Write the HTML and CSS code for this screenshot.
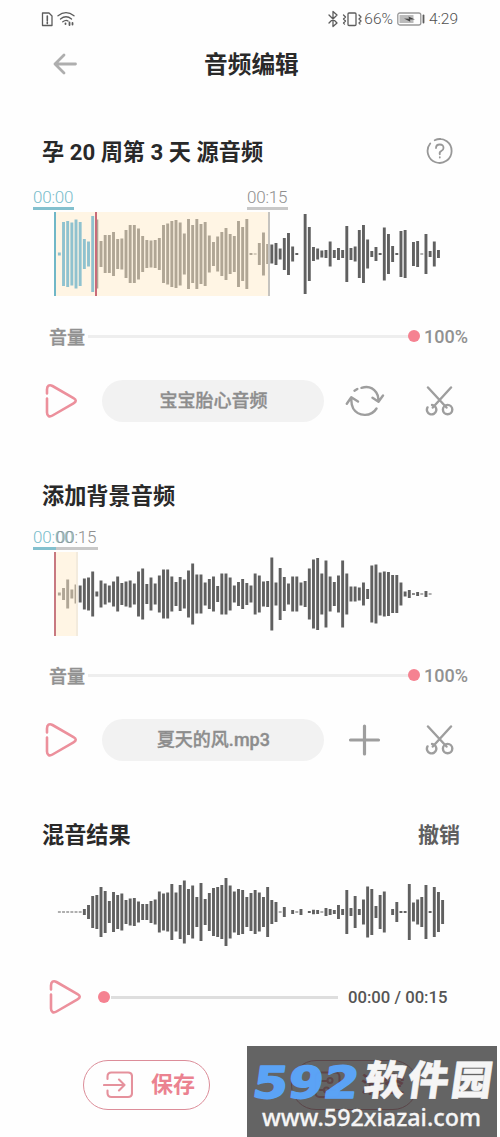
FILE: index.html
```html
<!DOCTYPE html>
<html lang="zh-CN">
<head>
<meta charset="utf-8">
<title>音频编辑</title>
<link rel="stylesheet" href="styles.css">
</head>
<body>
<svg class="defs" aria-hidden="true">
  <symbol id="play" viewBox="0 0 36 38"><path d="M4 11.5V7.5C4 3.7 6.3 2.2 9.5 4L30.500 16.200C33.500 18 33.500 19.600 30.500 21.300L9.500 33.500C6.300 35.300 4 34 4 30.500V16.500"/></symbol>
  <symbol id="scissors" viewBox="0 0 30 30"><path d="M3 1.500L21.500 21.500M26 1.500L7.800 21.500"/><circle cx="22.600" cy="23.600" r="4.700"/><path d="M2.500 21.400A4.700 4.700 0 1 0 7 19"/></symbol>
</svg>
<div class="screen">
  <div class="status">
    <svg class="status-left" width="34" height="18" viewBox="0 0 34 18"><path d="M1.500 3h6.500l3 3v9.500h-9.500z"/><path d="M6.300 6v4.500M6.300 12v1.600" stroke-width="1.600"/><path d="M17 5.800Q25-.5 33 5.800M19.500 9Q25 4.500 30.500 9M21.800 11.800Q25 9.500 27 11"/><path d="M24.500 13.500v.5M28.500 12.500v2.500M31.500 13v1.500" stroke-width="1.800"/></svg>
    <div class="status-right">
      <svg width="34" height="18" viewBox="0 0 34 18"><path d="M1 5l8 8-4 3.500V1.500L9 5l-8 8"/><rect x="20" y="3" width="8" height="12.500" rx="1"/><path d="M15.500 5l2 2-2 2 2 2-2 2 1 1M31 5l2 2-2 2 2 2-2 2 1 1"/></svg>
      <span class="percent">66%</span>
      <svg class="battery" width="28" height="14" viewBox="0 0 28 14"><rect x=".8" y="1" width="23" height="12" rx="2" class="case"/><rect x="2.500" y="3" width="14" height="8" class="charge"/><path class="bolt" d="M7 6.500l5 .2L11.500 4.500 18 7.500l-5 0 .3 2.300z"/><path d="M26.500 3.500v7" stroke-width="1.800"/></svg>
      <span>4:29</span>
    </div>
  </div>
  <header class="header">
    <svg width="24" height="22" viewBox="0 0 24 22"><path d="M22.500 11H2M11 2L2 11l9 9"/></svg>
    <h1>音频编辑</h1>
  </header>

  <section class="source">
    <div class="section-head">
      <h2>孕 20 周第 3 天 源音频</h2>
      <svg class="help" width="28" height="28" viewBox="0 0 28 28"><path d="M4.200 6.500A12 12 0 1 0 10 2.500Q12.200 1.800 14.500 2A12 12 0 0 0 8.700 3.200"/><path d="M10 11Q10 7.500 13.800 7.500T17.500 11Q17.500 12.800 15.300 14T13.800 17.200M13.800 20.200v.3"/></svg>
    </div>
    <div class="marks"><span class="mark start">00:00</span><span class="mark end">00:15</span></div>
    <div class="track">
      <svg class="wave" data-wave="source"></svg>
      <div class="range range-source"></div>
      <div class="line line-start"></div><div class="line line-head"></div><div class="line line-end"></div>
    </div>
    <div class="volume"><span class="label">音量</span><div class="rail"></div><i class="knob"></i><span class="value">100%</span></div>
    <div class="actions">
      <svg class="play"><use href="#play"/></svg>
      <div class="pill">宝宝胎心音频</div>
      <svg class="tool swap" viewBox="0 0 40 32"><path d="M16.500 2.800Q26-.2 31.300 7.500Q33.800 11 33.500 16M27.500 12.700L33.500 16.800 38 10.500M9.500 5.700l2.800-1.800M31.500 23.500C26 32.500 13 31.500 8.200 23.500Q6 19.500 6.400 13.500M1.800 18.700L6.300 12.200 13 16.500"/></svg>
      <svg class="tool cut"><use href="#scissors"/></svg>
    </div>
  </section>

  <section class="background">
    <div class="section-head"><h2>添加背景音频</h2></div>
    <div class="marks overlap"><span class="mark start">00:00</span><span class="mark end">00:15</span></div>
    <div class="track">
      <svg class="wave" data-wave="background"></svg>
      <div class="range range-background"></div>
      <div class="line line-origin"></div>
    </div>
    <div class="volume"><span class="label">音量</span><div class="rail"></div><i class="knob"></i><span class="value">100%</span></div>
    <div class="actions">
      <svg class="play"><use href="#play"/></svg>
      <div class="pill">夏天的风.mp3</div>
      <svg class="tool plus" viewBox="0 0 40 32"><path d="M19.500 2v28M5.500 16h28"/></svg>
      <svg class="tool cut"><use href="#scissors"/></svg>
    </div>
  </section>

  <section class="result">
    <div class="section-head"><h2>混音结果</h2><span class="undo">撤销</span></div>
    <div class="track"><svg class="wave" data-wave="result"></svg></div>
    <div class="player"><svg class="play"><use href="#play"/></svg><i class="knob"></i><div class="rail"></div><span>00:00 / 00:15</span></div>
  </section>

  <footer class="footer">
    <div class="button"><svg width="30" height="28" viewBox="0 0 30 28"><path d="M4.500 8V5.500Q4.500 1.500 8.500 1.500H25Q29 1.500 29 5.500V22Q29 26 25 26H8.500Q4.500 26 4.500 22V19.500M1 14H21M16 8.500l5.500 5.500-5.500 5.500"/></svg><span>保存</span></div>
    <div class="button clear"><svg width="30" height="28" viewBox="0 0 30 28"><rect x="4.500" y="1.500" width="24" height="24.500" rx="4"/><path d="M9 10H16M9 19h4M18 19h6"/><circle cx="19" cy="9.500" r="2.500"/><circle cx="15.500" cy="19" r="2.500"/></svg><span>清空</span></div>
  </footer>
  <div class="watermark">
    <svg width="250" height="91" viewBox="0 0 250 91">
      <g transform="translate(4 52) skewX(-8)"><text class="brand-num" textLength="106" lengthAdjust="spacingAndGlyphs">592</text><text class="brand-cn" x="111" y="-3" textLength="128">软件园</text></g>
      <text class="site" x="15" y="80" textLength="219" lengthAdjust="spacingAndGlyphs">www.592xiazai.com</text>
    </svg>
  </div>
</div>
<script src="waves.js"></script>
</body>
</html>
```
FILE: styles.css
```css
* { box-sizing: border-box; }
body { margin: 0; background: #fff; font-family: Roboto, "Noto Sans CJK SC", sans-serif; }
h1, h2 { margin: 0; color: #292929; font-weight: 700; }
svg { display: block; fill: none; stroke-linecap: round; stroke-linejoin: round; }
.defs { position: absolute; width: 0; height: 0; }
.screen { position: relative; width: 500px; height: 1137px; overflow: hidden; background: #fefefe; }

.status { height: 38px; padding: 0 42px 0 41px; display: flex; justify-content: space-between; align-items: center; color: #505050; font-size: 15.5px; font-weight: 300; }
.status svg { stroke: #5c5c5c; stroke-width: 1.3; }
.status-right { display: flex; align-items: center; }
.percent { margin-left: 2px; }
.status .battery { margin: 0 4px 0 4px; }
.status .case { stroke: #999; }
.status .charge { fill: #bbb; stroke: none; }
.status .bolt { fill: #444; stroke: none; }

.header { height: 52px; padding-left: 53px; display: grid; grid-template-columns: 24px 1fr; align-items: center; }
.header svg { stroke: #aeaeae; stroke-width: 2.8; }
.header h1 { margin-left: 127px; padding-top: 2px; font-size: 23.7px; line-height: 34px; }

.source { margin-top: 44px; height: 343px; }
.background { height: 339px; }
.section-head { height: 36px; padding: 0 40px 0 42px; display: flex; align-items: center; justify-content: space-between; }
.section-head h2 { font-size: 22.2px; line-height: 34px; white-space: nowrap; }
.source .section-head { padding-right: 46px; }
.background h2 { padding-top: 1px; }
.help { stroke: #989898; stroke-width: 1.8; margin-top: -3px; }
.undo { color: #5f5f5f; font-size: 21px; font-weight: 700; line-height: 34px; }

.marks { height: 42px; padding: 18px 0 0 33px; display: flex; }
.mark { width: 41px; height: 22px; font-size: 17px; font-weight: 300; line-height: 18px; letter-spacing: -.2px; white-space: nowrap; }
.start { color: #78bccb; border-bottom: 3px solid #83c0ce; }
.end { color: #8f8f8f; border-bottom: 3px solid #c8c8c8; margin-left: 173px; }
.overlap { display: grid; height: 39px; padding-top: 15px; }
.overlap .mark { grid-area: 1 / 1; }
.overlap .end { margin-left: 23px; width: 42px; }

.track { position: relative; height: 84px; }
.wave { width: 500px; height: 84px; fill: #606060; }
.wave .played { fill: #1f98d4; }
.range { position: absolute; top: 0; height: 84px; background: rgba(255, 236, 202, .5); }
.range-source { left: 55px; width: 213px; }
.range-background { left: 55px; width: 23px; border-right: 2px solid #f3ebdd; }
.line { position: absolute; top: 0; height: 84px; width: 1.5px; }
.line-start { left: 54px; background: #70b7c7; }
.line-head { left: 95px; background: #c96b79; }
.line-end { left: 268px; width: 2px; background: #c5c3bf; }
.line-origin { left: 54px; background: #c87980; }

.volume { height: 40px; margin-top: 20px; padding-left: 49px; display: flex; align-items: center; color: #919191; font-size: 18px; font-weight: 500; }
.background .volume { margin-top: 19px; }
.label, .pill { -webkit-text-stroke: .35px currentColor; }
.volume .rail { width: 321px; height: 3px; margin-left: 3px; background: #eee; }
.knob { width: 12px; height: 12px; border-radius: 50%; background: #f58291; flex: none; }
.volume .knob { margin-left: -1px; }
.volume .value { margin-left: 4px; }
.actions { height: 50px; margin-top: 20px; padding-left: 43px; display: flex; align-items: center; }
.play { width: 36px; height: 38px; stroke: #ec909c; stroke-width: 2.6; flex: none; }
.pill { width: 222px; height: 42px; margin-left: 23.4px; border-radius: 21px; background: #f2f2f2; color: #8d8d8d; font-size: 18px; font-weight: 500; line-height: 42px; text-align: center; }
.background .pill { line-height: 41px; }
.tool { stroke: #9e9e9e; stroke-width: 2.4; flex: none; }
.swap, .plus { width: 40px; height: 32px; margin-left: 20.6px; }
.plus { stroke-width: 3.2; }
.cut { width: 30px; height: 30px; margin-left: 40px; }

.result { height: 205px; }
.result .section-head { padding-top: 1px; }
.result .track { margin-top: 18px; }
.player { height: 40px; margin-top: 23px; padding-left: 47px; display: flex; align-items: center; color: #555; font-size: 16.7px; font-weight: 500; }
.player .knob { margin-left: 15px; }
.player .rail { width: 227px; height: 3px; margin: 0 10px 0 1px; background: #dedede; }

.footer { padding: 39px 0 0 83px; display: flex; gap: 81px; }
.button { width: 127px; height: 50px; padding-left: 19px; display: flex; align-items: center; gap: 18px; border: 1.5px solid #dc8d99; border-radius: 25px; color: #eb8290; font-size: 22px; font-weight: 700; line-height: 30px; }
.button svg { stroke: #e5919c; stroke-width: 2.1; }
.clear { opacity: .75; gap: 20px; }
.watermark { position: absolute; left: 247px; top: 1046px; width: 250px; height: 91px; background: rgba(12, 12, 12, .64); }
.watermark svg { opacity: .94; }
.brand-num { font: 700 44px "DejaVu Sans", sans-serif; fill: #5ba7ff; stroke: #5ba7ff; stroke-width: 1.5; }
.brand-cn { font: 900 41px "Noto Sans CJK SC", sans-serif; fill: #fff; stroke: #fff; stroke-width: .5; }
.site { font: 500 24px "Noto Sans", "Open Sans", sans-serif; fill: #fff; stroke: #fff; stroke-width: .3; }
```
FILE: waves.js
```js
const waves = {
  source: [3,64,66,63,69,64,30,25,76,69,26,38,38,44,30,31,48,58,58,51,36,28,27,28,32,58,61,66,68,63,41,70,58,70,60,64,37,24,35,44,52,40,36,66,54,70,2,1,22,43,20,19,22,11,32,42,15,2,0,80,54,14,11,7,8,25,8,12,8,56,12,15,48,58,29,6,14,2,53,40,16,2,46,48,0,24,26,1,40,6,25,8],
  background: [3,12,29,9,19,17,31,33,45,5,27,21,17,25,35,22,25,27,21,45,51,20,33,21,37,49,49,35,24,34,29,47,61,39,39,23,30,35,16,41,41,33,17,24,30,22,17,41,37,25,26,73,23,52,34,21,35,35,23,26,51,69,72,41,67,35,24,37,67,41,15,15,13,23,10,57,59,43,45,44,38,38,23,5,8,1.5,4,1,6,1],
  result: [1,1,1,1,1,1,6,14,32,34,50,42,22,40,34,37,24,27,28,21,16,16,22,25,41,37,39,56,39,54,63,46,53,30,58,26,38,48,50,54,68,53,41,46,44,30,38,44,39,30,50,24,20,1,10,0,4,1,6,0,2,4.5,4,1,8,6,4,14,6,44,8,32,6,25,51,46,12,34,41,0,6,20,2,2,56,19,25,30,54,2,50,40,24]
};
document.querySelectorAll("[data-wave]").forEach(svg => {
  const name = svg.dataset.wave;
  waves[name].forEach((height, i) => {
    if (!height) return;
    const bar = document.createElementNS("http://www.w3.org/2000/svg", "rect");
    bar.setAttribute("x", (57.9 + i * 4.166).toFixed(2));
    bar.setAttribute("y", 42 - height / 2);
    bar.setAttribute("width", 2.9);
    bar.setAttribute("height", height);
    if (name === "source" && i < 9) bar.classList.add("played");
    svg.append(bar);
  });
});
```
